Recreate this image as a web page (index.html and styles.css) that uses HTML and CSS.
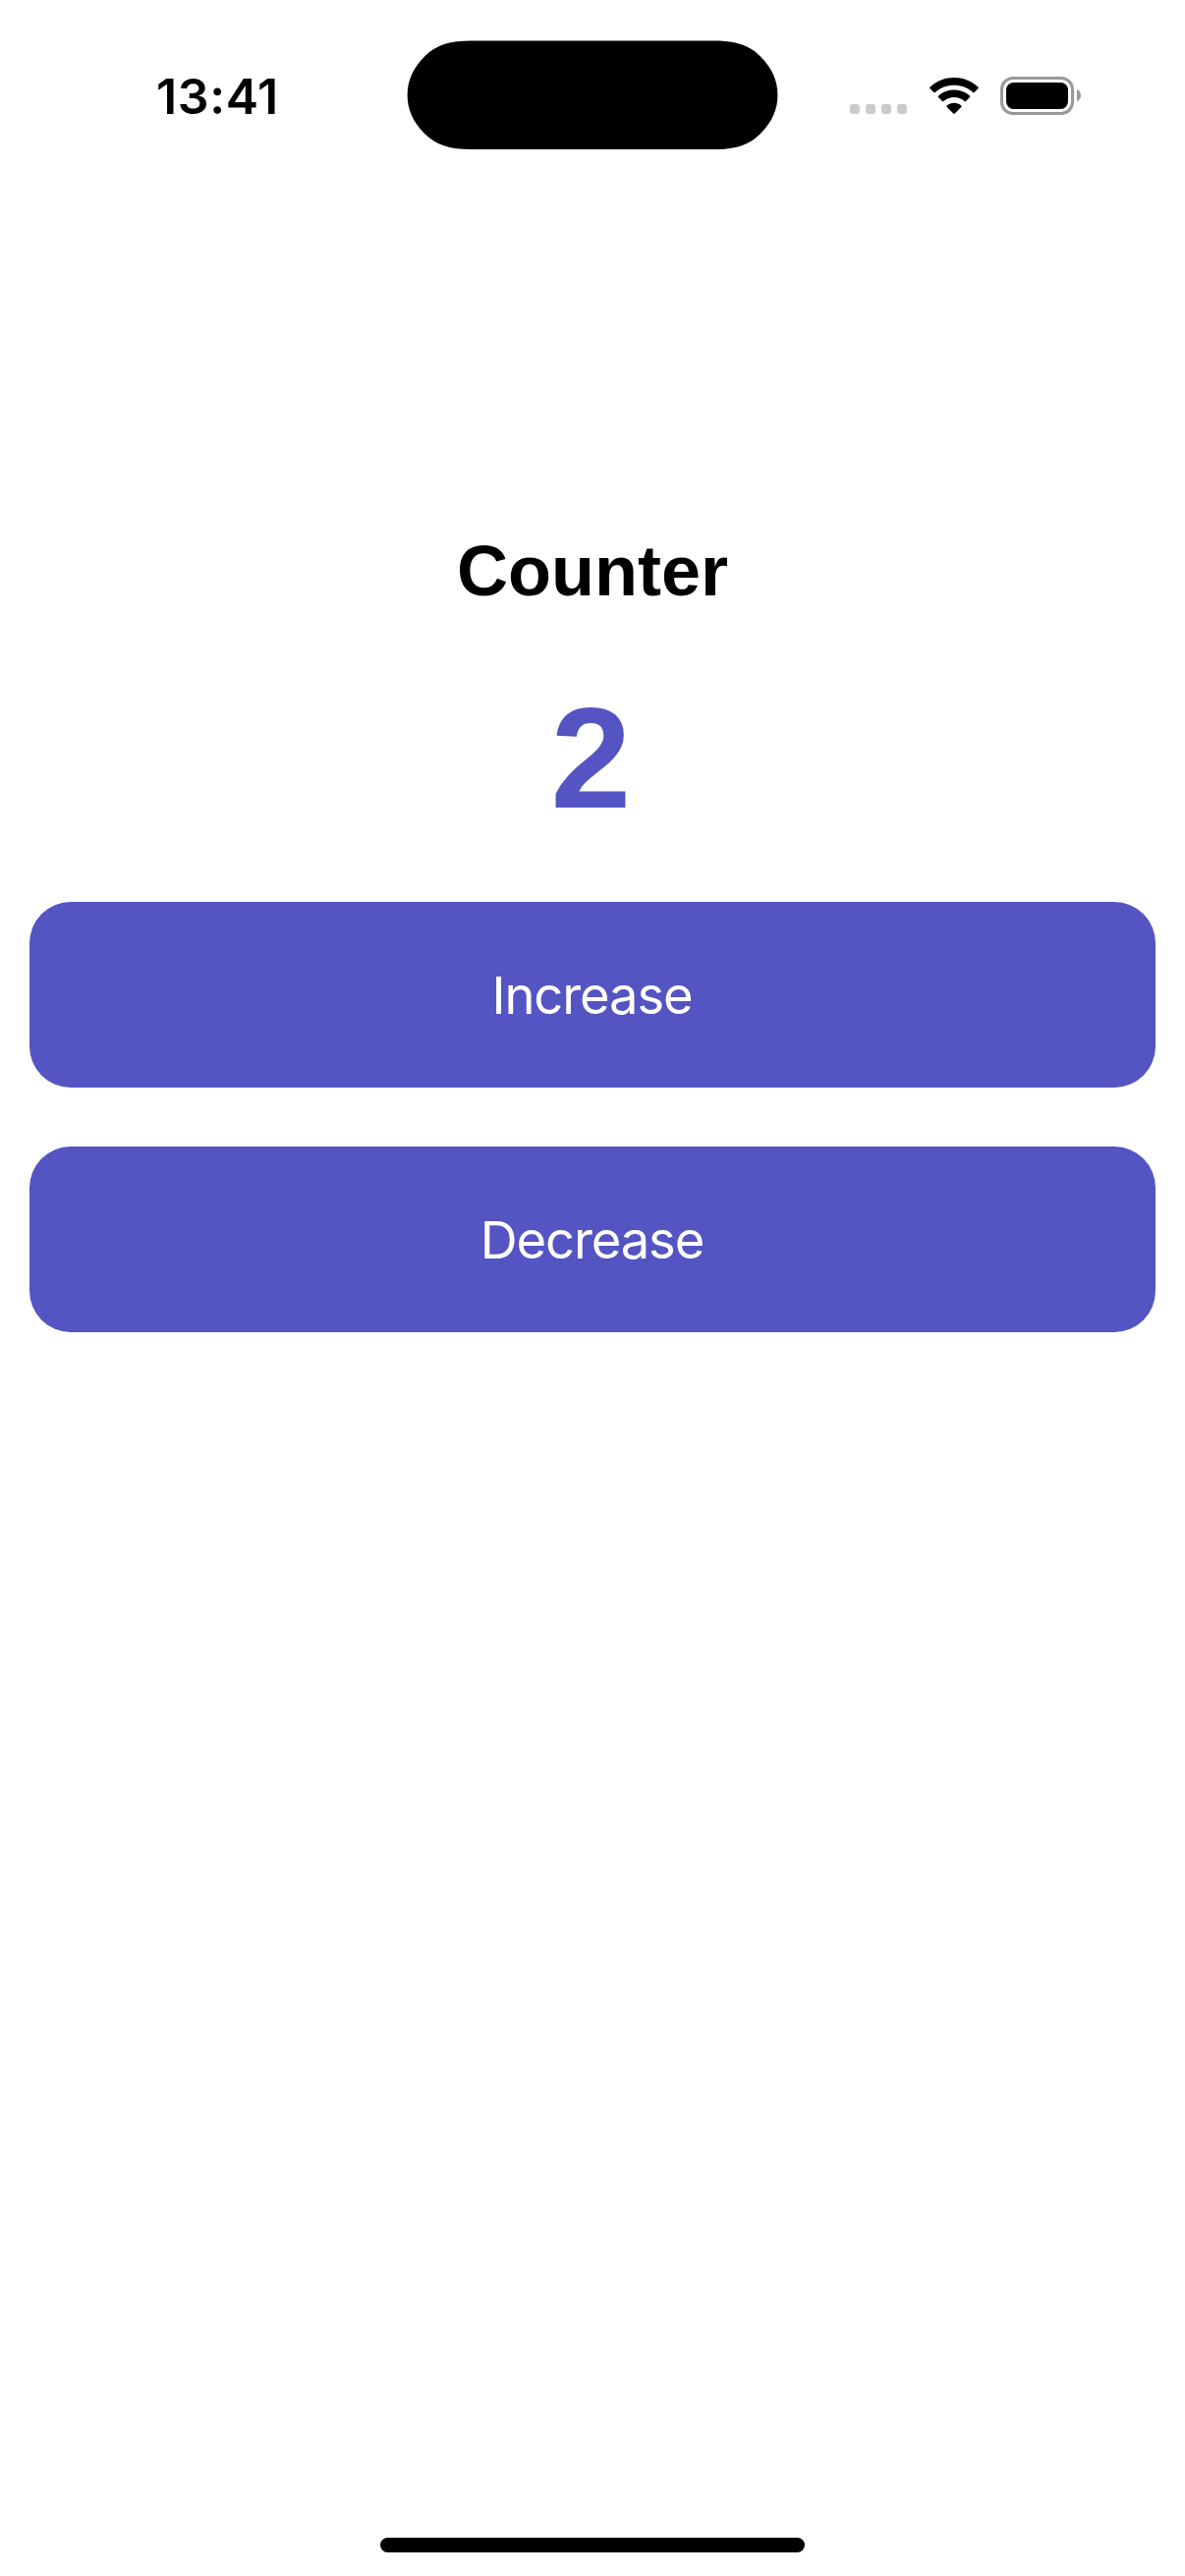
FILE: index.html
```html
<!DOCTYPE html>
<html lang="en">
<head>
<meta charset="utf-8">
<title>Counter</title>
<link rel="stylesheet" href="styles.css">
</head>
<body>
<div class="screen">
  <header class="status-bar">
    <div class="time">13:41</div>
    <svg class="island" width="378" height="112" viewBox="414 41 378 112" aria-hidden="true">
      <path d="M479 41.6H727C747 41.6 761.7 45.3 773.7 57.3C785.7 69.3 791.4 82 791.4 96.8C791.4 111.6 785.7 124.3 773.7 136.3C761.7 148.3 747 152 727 152H479C459 152 444.3 148.3 432.3 136.3C420.3 124.3 414.6 111.6 414.6 96.8C414.6 82 420.3 69.3 432.3 57.3C444.3 45.3 459 41.6 479 41.6Z"/>
    </svg>
    <div class="indicators">
      <svg class="signal" width="58" height="10" viewBox="0 0 58 10" fill="#cbcbcb" aria-hidden="true">
        <rect width="10" height="10" rx="3.2"/><rect x="16" width="10" height="10" rx="3.2"/><rect x="32" width="10" height="10" rx="3.2"/><rect x="48" width="10" height="10" rx="3.2"/>
      </svg>
      <svg class="wifi" width="50" height="37" viewBox="0 0 50 37" aria-hidden="true">
        <path d="M.4 9.7C14-3.2 36-3.2 49.6 9.7Q50.2 10.4 49.6 11.1L45.6 15Q44.9 15.6 44.2 15C33.5 5.3 16.5 5.3 5.8 15Q5.1 15.6 4.4 15L.4 11.1Q-.2 10.4 .4 9.7Z"/>
        <path d="M9 18.5C18 10.6 32 10.6 41 18.5Q41.7 19.3 41 20L37 23.9Q36.3 24.5 35.6 23.9C29.5 18.6 20.5 18.6 14.4 23.9Q13.7 24.5 13 23.9L9 20Q8.3 19.3 9 18.5Z"/>
        <path d="M17.7 28.5C21.7 24.8 28.3 24.8 32.3 28.5Q33 29.2 32.3 29.9L25.8 36.4Q25 37.2 24.2 36.4L17.7 29.9Q17 29.2 17.7 28.5Z"/>
      </svg>
      <svg class="battery" width="82" height="39" viewBox="0 0 82 39" aria-hidden="true">
        <rect x="1.5" y="1.5" width="72" height="36" rx="11.5" fill="none" stroke="#999" stroke-width="3"/>
        <rect x="6" y="6" width="63" height="27" rx="7.5"/>
        <path d="M78 13C83.3 15.3 83.3 23 78 25.3Z" fill="#999"/>
      </svg>
    </div>
  </header>
  <main class="counter">
    <h1 class="title">Counter</h1>
    <div class="value">2</div>
    <div class="actions">
      <button class="action" type="button">Increase</button>
      <button class="action" type="button">Decrease</button>
    </div>
  </main>
  <div class="home-indicator"></div>
</div>
</body>
</html>
```
FILE: styles.css
```css
body {
  margin: 0;
  background: #fff;
  color: #000;
}

.screen {
  box-sizing: border-box;
  display: flex;
  flex-direction: column;
  height: 2622px;
  padding-bottom: 24px;
}

.status-bar {
  display: grid;
  grid-template-columns: 414px 378px 1fr;
  align-items: start;
  height: 177px;
}

.time {
  padding: 68px 0 0 159px;
  font: 600 50px/60px Inter, "Liberation Sans", sans-serif;
  letter-spacing: 0.6px;
}

.island {
  margin-top: 41px;
}

.indicators {
  display: flex;
  align-items: flex-end;
  padding: 78px 0 0 73px;
}

.signal {
  margin-bottom: 1px;
}

.wifi {
  margin: 0 22px 1px 23px;
}

.counter {
  flex: 1;
  padding: 362px 30px 0;
  font-family: "Liberation Sans", Arial, sans-serif;
  text-align: center;
}

.title {
  margin: 0 0 66px;
  font-size: 72px;
  line-height: 84px;
}

.value {
  margin-bottom: 64px;
  padding-right: 3px;
  color: #5454c3;
  font-size: 147px;
  font-weight: 700;
  line-height: 165px;
}

.actions {
  display: grid;
  gap: 60px;
}

.action {
  height: 189px;
  padding: 2px 1px 0 0;
  border: 0;
  border-radius: 42px;
  background: #5454c3;
  color: #fff;
  font: 400 52.5px/63px Inter, "Liberation Sans", sans-serif;
  letter-spacing: -1.1px;
}

.home-indicator {
  align-self: center;
  width: 432px;
  height: 15px;
  border-radius: 8px;
  background: #000;
}
```
